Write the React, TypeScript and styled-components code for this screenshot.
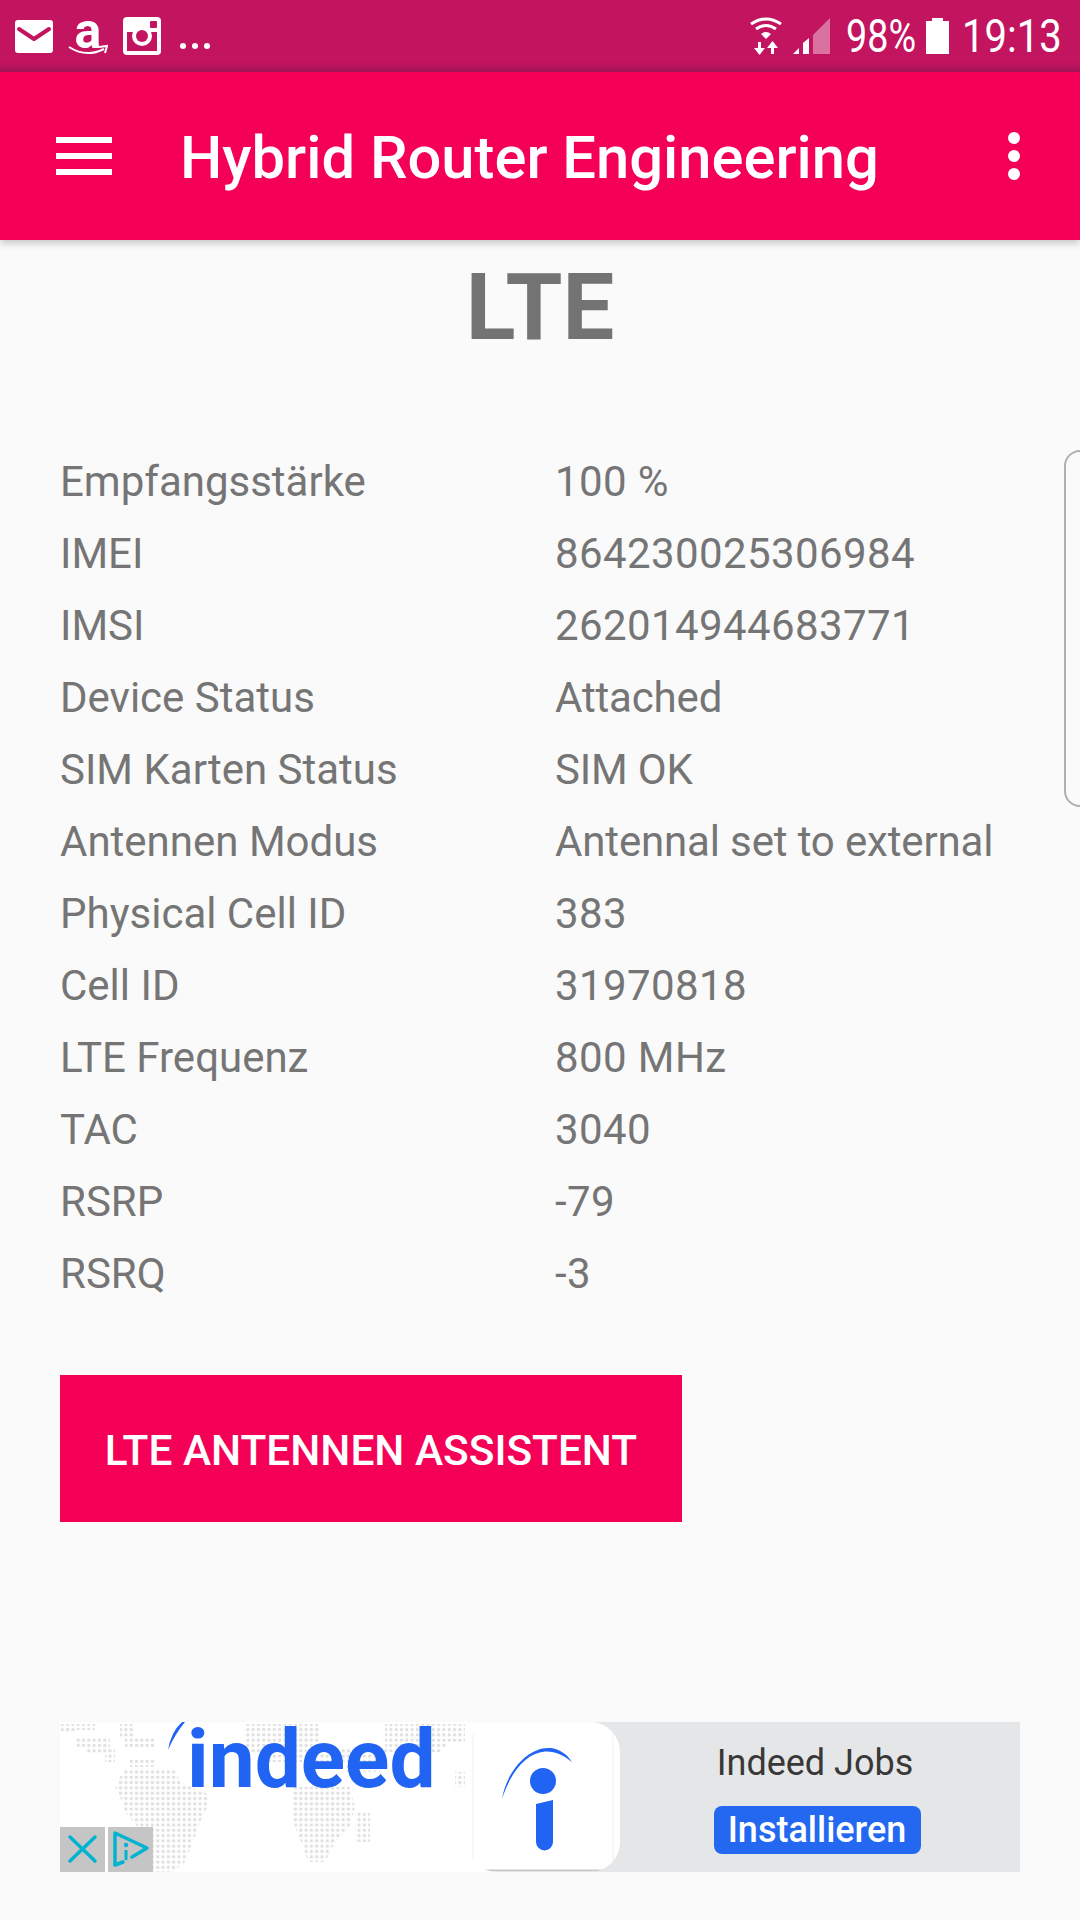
import React from 'react'
import styled, { createGlobalStyle } from 'styled-components'

const GlobalStyle = createGlobalStyle`
    html, body {
        margin: 0;
        padding: 0;
        background: #fafafa;
    }
`

const Screen = styled.div`
    position: relative;
    width: 1080px;
    height: 1920px;
    overflow: hidden;
    background: #fafafa;
    font-family: Roboto, "Liberation Sans", sans-serif;
    color: #757575;
`

const StatusBar = styled.div`
    display: flex;
    align-items: center;
    justify-content: space-between;
    height: 72px;
    padding: 0 22px 0 15px;
    box-sizing: border-box;
    background: linear-gradient(to bottom, #c2145f 0, #c2145f 62px, #a8145a 72px);
    color: #fff;
`

const IconGroup = styled.div`
    display: flex;
    align-items: center;
`

const StatusIcon = styled.svg<{ $gap?: number }>`
    display: block;
    flex: none;
    margin-right: ${p => p.$gap ?? 0}px;
`

const Condensed = styled.span<{ $width: number; $gap?: number; $squeeze: number }>`
    display: block;
    width: ${p => p.$width}px;
    margin-right: ${p => p.$gap ?? 0}px;
    font-size: 46px;
    line-height: 50px;
    white-space: nowrap;
    transform: scaleX(${p => p.$squeeze});
    transform-origin: left center;
`

const AmazonIcon = styled.div`
    position: relative;
    flex: none;
    width: 40px;
    height: 44px;
    margin-right: 15px;
`

const AmazonLetter = styled.span`
    display: block;
    font-size: 50px;
    font-weight: 700;
    line-height: 44px;
    text-align: center;
    margin-top: -5px;
`

const AmazonSmile = styled.svg`
    position: absolute;
    left: 0;
    bottom: 0;
`

const AppBar = styled.header`
    position: relative;
    display: flex;
    align-items: center;
    height: 168px;
    padding: 0 60px 0 56px;
    box-sizing: border-box;
    background: #f50057;
    box-shadow: 0 3px 8px rgba(0, 0, 0, 0.22);
    color: #fff;
`

const Hamburger = styled.div`
    display: flex;
    flex-direction: column;
    gap: 10px;
    width: 56px;
    margin-right: 68px;
`

const HamburgerBar = styled.span`
    display: block;
    height: 6px;
    background: #fff;
`

const AppTitle = styled.h1`
    flex: 1;
    margin: 4px 0 0;
    font-size: 59.7px;
    font-weight: 500;
    line-height: 70px;
`

const Overflow = styled.div`
    display: flex;
    flex-direction: column;
    gap: 6px;
`

const OverflowDot = styled.span`
    display: block;
    width: 12px;
    height: 12px;
    border-radius: 50%;
    background: #fff;
`

const Heading = styled.h2`
    margin: 20px 0 0;
    text-align: center;
    font-size: 92px;
    font-weight: 700;
    line-height: 96px;
    color: #737373;
`

const InfoGrid = styled.dl`
    display: grid;
    grid-template-columns: 495px 1fr;
    grid-auto-rows: 72px;
    margin: 90px 0 0;
    padding-left: 60px;
    font-size: 42px;
    line-height: 72px;
`

const InfoLabel = styled.dt`
    margin: 0;
`

const InfoValue = styled.dd<{ $numeric: boolean }>`
    margin: 0;
    letter-spacing: ${p => (p.$numeric ? '0.4px' : '-0.15px')};
`

const PrimaryButton = styled.button`
    display: block;
    width: 622px;
    height: 147px;
    margin: 65px 0 0 60px;
    padding: 3px 0 0;
    border: 0;
    border-radius: 0;
    background: #f50057;
    color: #fff;
    font-family: inherit;
    font-size: 42.4px;
    font-weight: 500;
`

const Handle = styled.div`
    position: absolute;
    top: 450px;
    right: -16px;
    width: 28px;
    height: 353px;
    border: 2px solid #b0b0b0;
    border-radius: 20px;
`

const AdBanner = styled.div`
    display: flex;
    width: 960px;
    height: 150px;
    margin: 200px 0 0 60px;
    background: linear-gradient(to right, #fff 440px, #e5e6e8 440px);
`

const AdVisual = styled.div`
    position: relative;
    flex: none;
    width: 407px;
    height: 150px;
`

const AdLogo = styled.span`
    position: absolute;
    top: -8px;
    left: 127px;
    font-size: 82px;
    font-weight: 700;
    line-height: 90px;
    color: #2164f3;
`

const AdMap = styled.svg`
    position: absolute;
    top: 0;
    left: 0;
`

const AdControls = styled.div`
    position: absolute;
    left: 0;
    bottom: 0;
    display: flex;
    gap: 3px;
`

const AdControl = styled.svg`
    display: block;
    width: 45px;
    height: 45px;
    background: #c5c5c5;
`

const AppTile = styled.div`
    flex: none;
    width: 153px;
    height: 150px;
    border-radius: 30px;
    background: #fff;
    overflow: hidden;
`

const AdBody = styled.div`
    flex: 1;
    display: flex;
    flex-direction: column;
    align-items: center;
    padding: 19px 6px 0 0;
`

const AdName = styled.div`
    margin-right: 4px;
    font-size: 36px;
    line-height: 44px;
    color: #383838;
`

const InstallButton = styled.div`
    margin-top: 21px;
    width: 207px;
    height: 48px;
    border-radius: 8px;
    background: #2468f2;
    color: #fff;
    font-size: 36px;
    font-weight: 500;
    line-height: 48px;
    text-align: center;
`

type InfoRow = {
    label: string
    value: string
}

const rows: InfoRow[] = [
    { label: 'Empfangsstärke', value: '100 %' },
    { label: 'IMEI', value: '864230025306984' },
    { label: 'IMSI', value: '262014944683771' },
    { label: 'Device Status', value: 'Attached' },
    { label: 'SIM Karten Status', value: 'SIM OK' },
    { label: 'Antennen Modus', value: 'Antennal set to external' },
    { label: 'Physical Cell ID', value: '383' },
    { label: 'Cell ID', value: '31970818' },
    { label: 'LTE Frequenz', value: '800 MHz' },
    { label: 'TAC', value: '3040' },
    { label: 'RSRP', value: '-79' },
    { label: 'RSRQ', value: '-3' },
]

const mapShapes = [
    'M0 2 H35 V8 H15 V15 H50 V25 H55 V40 H45 V32 H25 V25 H15 V10 H0 Z',
    'M60 2 H75 V15 H60 Z',
    'M65 15 H95 V25 H65 Z',
    'M70 38 H95 V45 H70 Z',
    'M65 46 H115 L120 60 L148 72 V85 L140 100 L135 115 L125 140 L112 150 H93 L90 125 L78 105 L65 90 L60 75 L55 65 L60 55 Z',
    'M184 2 H260 V25 H325 V2 H405 V20 H390 L380 30 H320 V50 H285 V40 H200 V30 H184 Z',
    'M232 65 H290 L295 85 L290 105 L275 120 L265 140 H248 L243 125 L235 105 L233 95 Z',
    'M295 90 H310 V120 H295 Z',
    'M395 50 H405 V65 H395 Z',
]

const App = () => {
    return (
        <Screen>
            <GlobalStyle />
            <StatusBar>
                <IconGroup>
                    <StatusIcon width="38" height="33" viewBox="0 0 38 33" $gap={15}>
                        <rect width="38" height="33" rx="3" fill="#fff" />
                        <path d="M4 9 L19 19 L34 9" fill="none" stroke="#c2145f" strokeWidth="4" strokeLinecap="round" strokeLinejoin="round" />
                    </StatusIcon>
                    <AmazonIcon>
                        <AmazonLetter>a</AmazonLetter>
                        <AmazonSmile width="40" height="14" viewBox="0 0 40 14">
                            <path d="M1 3 Q18 14 36 5" fill="none" stroke="#fff" strokeWidth="2" />
                            <path d="M31 3 L39 2 L37 9" fill="none" stroke="#fff" strokeWidth="2" />
                        </AmazonSmile>
                    </AmazonIcon>
                    <StatusIcon width="38" height="38" viewBox="0 0 38 38" $gap={19}>
                        <rect width="38" height="38" rx="4" fill="#fff" />
                        <rect x="4" y="15" width="30" height="19" fill="#c2145f" />
                        <circle cx="19" cy="19" r="10" fill="#fff" />
                        <circle cx="19" cy="19" r="6" fill="#c2145f" />
                        <rect x="27" y="4" width="7" height="7" rx="1" fill="#c2145f" />
                    </StatusIcon>
                    <StatusIcon width="30" height="38" viewBox="0 0 30 38">
                        <circle cx="3" cy="29" r="3" fill="#fff" />
                        <circle cx="15" cy="29" r="3" fill="#fff" />
                        <circle cx="27" cy="29" r="3" fill="#fff" />
                    </StatusIcon>
                </IconGroup>
                <IconGroup>
                    <StatusIcon width="32" height="38" viewBox="0 0 32 38" $gap={11}>
                        <path d="M1 7 Q16 -3 31 7" fill="none" stroke="#fff" strokeWidth="3" />
                        <path d="M6 12 Q16 5 26 12" fill="none" stroke="#fff" strokeWidth="3" />
                        <path d="M11 17 Q16 13 21 17 L16 22 Z" fill="#fff" />
                        <path d="M9.5 25 V32" stroke="#fff" strokeWidth="3" />
                        <path d="M4 31 H15 L9.5 38 Z" fill="#fff" />
                        <path d="M22.5 37 V30" stroke="#fff" strokeWidth="3" />
                        <path d="M17 31 H28 L22.5 24 Z" fill="#fff" />
                    </StatusIcon>
                    <StatusIcon width="37" height="37" viewBox="0 0 37 37" $gap={16}>
                        <path d="M0 36 L6 30 V36 Z" fill="#fff" />
                        <path d="M10 36 V25 L16 20 V36 Z" fill="#fff" />
                        <path d="M20 36 V17 L37 0 V36 Z" fill="#fff" opacity="0.4" />
                    </StatusIcon>
                    <Condensed $width={70} $gap={10} $squeeze={0.82}>98%</Condensed>
                    <StatusIcon width="23" height="36" viewBox="0 0 23 36" $gap={13}>
                        <path d="M0 3 H6 V0 H17 V3 H23 V36 H0 Z" fill="#fff" />
                    </StatusIcon>
                    <Condensed $width={96} $squeeze={0.87}>19:13</Condensed>
                </IconGroup>
            </StatusBar>
            <AppBar>
                <Hamburger>
                    <HamburgerBar />
                    <HamburgerBar />
                    <HamburgerBar />
                </Hamburger>
                <AppTitle>Hybrid Router Engineering</AppTitle>
                <Overflow>
                    <OverflowDot />
                    <OverflowDot />
                    <OverflowDot />
                </Overflow>
            </AppBar>
            <Heading>LTE</Heading>
            <InfoGrid>
                {rows.map(row => (
                    <React.Fragment key={row.label}>
                        <InfoLabel>{row.label}</InfoLabel>
                        <InfoValue $numeric={/\d/.test(row.value)}>{row.value}</InfoValue>
                    </React.Fragment>
                ))}
            </InfoGrid>
            <PrimaryButton>LTE ANTENNEN ASSISTENT</PrimaryButton>
            <Handle />
            <AdBanner>
                <AdVisual>
                    <AdMap width="407" height="150" viewBox="0 0 407 150">
                        <defs>
                            <pattern id="dots" width="5.3" height="5.3" patternUnits="userSpaceOnUse">
                                <rect x="0.8" y="0.8" width="3" height="3" fill="#e0e0e0" />
                            </pattern>
                        </defs>
                        {mapShapes.map(d => <path key={d} d={d} fill="url(#dots)" />)}
                    </AdMap>
                    <AdLogo>indeed</AdLogo>
                    <AdMap width="407" height="150" viewBox="0 0 407 150">
                        <path d="M108 28 Q111 10 122 0 L125 0 Q115 12 108 28 Z" fill="#2164f3" />
                    </AdMap>
                    <AdControls>
                        <AdControl viewBox="0 0 45 45">
                            <path d="M10 10 L35 34 M35 10 L10 34" stroke="#00b4d0" strokeWidth="3.5" strokeLinecap="round" />
                        </AdControl>
                        <AdControl viewBox="0 0 45 45">
                            <path d="M7 37 V6 L39 21 L24 30" fill="none" stroke="#00b4d0" strokeWidth="3.5" strokeLinecap="round" strokeLinejoin="round" />
                            <path d="M7 38 L15 35" stroke="#00b4d0" strokeWidth="3.5" strokeLinecap="round" />
                            <circle cx="18" cy="18" r="2.2" fill="#00b4d0" />
                            <path d="M18 23 V33" stroke="#00b4d0" strokeWidth="3" />
                        </AdControl>
                    </AdControls>
                </AdVisual>
                <AppTile>
                    <svg width="153" height="150" viewBox="0 0 153 150">
                        <path d="M6 0 V148 M146 0 V148" stroke="#f0f0f0" strokeWidth="1" />
                        <path d="M0 148.5 H153" stroke="#c8c8c8" strokeWidth="2" />
                        <path d="M35 77 C40 48 62 24 84 26 C92 27 100 32 105 40 C96 33 88 29 78 29.5 C58 31 43 52 35 77 Z" fill="#2164f3" />
                        <circle cx="76" cy="59" r="13" fill="#2164f3" />
                        <path d="M69 82 L86 78 V120 A8.5 8.5 0 0 1 69 120 Z" fill="#2164f3" />
                    </svg>
                </AppTile>
                <AdBody>
                    <AdName>Indeed Jobs</AdName>
                    <InstallButton>Installieren</InstallButton>
                </AdBody>
            </AdBanner>
        </Screen>
    )
}

export default App
